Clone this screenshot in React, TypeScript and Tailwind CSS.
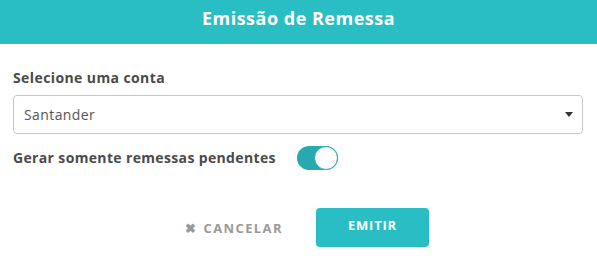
export default function App() {
  return (
    <div className="w-[597px] h-[261px] bg-white font-['Open_Sans',sans-serif] text-[#4a4a4a]">
      <div className="h-[44px] bg-[#29bec4] flex items-center justify-center">
        <h1 className="text-white font-bold text-[18px] tracking-[0.5px] -mt-[7px]">Emissão de Remessa</h1>
      </div>
      <div className="px-[13px] pt-[24px]">
        <label className="block text-[14px] font-bold tracking-[0.4px] leading-[20px]">Selecione uma conta</label>
        <div className="mt-[7px] h-[39px] w-[570px] border border-[#c8c8c8] rounded-[4px] flex items-center justify-between pl-[10px] pr-[9px]">
          <span className="text-[14px] tracking-[0.4px] text-[#555]">Santander</span>
          <svg width="8" height="5" viewBox="0 0 8 5">
            <path d="M0 0h8L4 5z" fill="#333" />
          </svg>
        </div>
        <div className="mt-[12px] flex items-center gap-[21px]">
          <span className="text-[14px] font-bold tracking-[0.35px] leading-[20px]">Gerar somente remessas pendentes</span>
          <div className="w-[41px] h-[24px] rounded-full bg-[#26aaad] relative">
            <div className="absolute right-0 top-0 w-[24px] h-[24px] rounded-full bg-white border border-[#26aaad]" />
          </div>
        </div>
        <div className="mt-[38px] flex items-center justify-center gap-[33px] pl-[17px]">
          <button className="flex items-center gap-[6px] text-[13px] font-bold text-[#999] tracking-[1.4px] pt-[3px]">
            <span className="text-[13px]">✖</span>CANCELAR
          </button>
          <button className="w-[113px] h-[39px] rounded-[4px] bg-[#29bec4] text-white text-[13px] font-bold tracking-[0.8px] pb-[3px]">
            EMITIR
          </button>
        </div>
      </div>
    </div>
  );
}
